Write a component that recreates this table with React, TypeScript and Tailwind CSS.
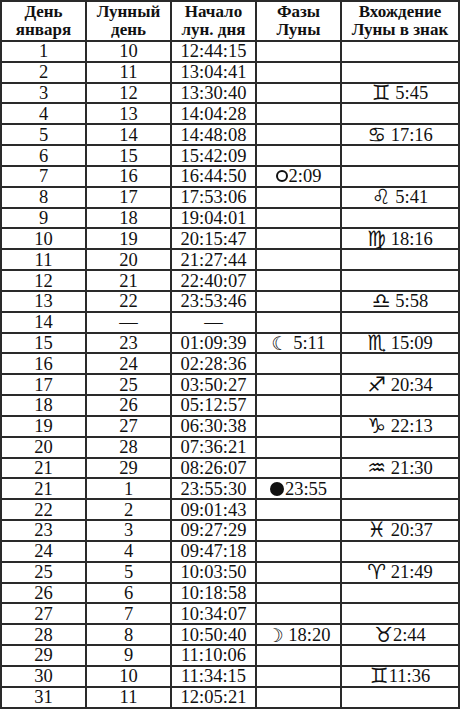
const rows: [string, string, string, string, string][] = [
  ['1', '10', '12:44:15', '', ''],
  ['2', '11', '13:04:41', '', ''],
  ['3', '12', '13:30:40', '', '♊| 5:45'],
  ['4', '13', '14:04:28', '', ''],
  ['5', '14', '14:48:08', '', '♋| 17:16'],
  ['6', '15', '15:42:09', '', ''],
  ['7', '16', '16:44:50', 'full|2:09', ''],
  ['8', '17', '17:53:06', '', '♌| 5:41'],
  ['9', '18', '19:04:01', '', ''],
  ['10', '19', '20:15:47', '', '♍| 18:16'],
  ['11', '20', '21:27:44', '', ''],
  ['12', '21', '22:40:07', '', ''],
  ['13', '22', '23:53:46', '', '♎| 5:58'],
  ['14', '—', '—', '', ''],
  ['15', '23', '01:09:39', '☾| 5:11', '♏| 15:09'],
  ['16', '24', '02:28:36', '', ''],
  ['17', '25', '03:50:27', '', '♐| 20:34'],
  ['18', '26', '05:12:57', '', ''],
  ['19', '27', '06:30:38', '', '♑| 22:13'],
  ['20', '28', '07:36:21', '', ''],
  ['21', '29', '08:26:07', '', '♒| 21:30'],
  ['21', '1', '23:55:30', 'new|23:55', ''],
  ['22', '2', '09:01:43', '', ''],
  ['23', '3', '09:27:29', '', '♓| 20:37'],
  ['24', '4', '09:47:18', '', ''],
  ['25', '5', '10:03:50', '', '♈| 21:49'],
  ['26', '6', '10:18:58', '', ''],
  ['27', '7', '10:34:07', '', ''],
  ['28', '8', '10:50:40', '☽| 18:20', '♉|2:44'],
  ['29', '9', '11:10:06', '', ''],
  ['30', '10', '11:34:15', '', '♊|11:36'],
  ['31', '11', '12:05:21', '', ''],
];

const cell = 'border-r-2 border-b-2 border-[#2a2a2a] flex items-center justify-center';

function Symbol({ value }: { value: string }) {
  if (!value) return null;
  const [sym, time] = value.split('|');
  let mark;
  if (sym === 'full') {
    mark = <span className="inline-block w-[12px] h-[12px] rounded-full border-[2.5px] border-[#111] mr-[1px]" />;
  } else if (sym === 'new') {
    mark = <span className="inline-block w-[14px] h-[14px] rounded-full bg-[#111] mr-[1px]" />;
  } else if (sym === '☾' || sym === '☽') {
    mark = <span className="font-['DejaVu_Sans',sans-serif] font-bold text-[19px] leading-[18px]">{sym}</span>;
  } else {
    mark = <span className="font-['DejaVu_Sans',sans-serif] text-[21px] leading-[18px]">{sym + '\uFE0E'}</span>;
  }
  return (
    <span className="flex items-center whitespace-pre">
      {mark}
      <span>{time}</span>
    </span>
  );
}

export default function App() {
  return (
    <div className="w-[464px] h-[710px] bg-white text-[#111] font-['Liberation_Serif',serif]">
      <div className="w-[460px] border-l-2 border-t-2 border-[#2a2a2a] grid grid-cols-[85px_85px_85px_85px_118px]">
        {['День|января', 'Лунный|день', 'Начало|лун. дня', 'Фазы|Луны', 'Вхождение|Луны в знак'].map((h) => (
          <div key={h} className={`${cell} h-[40px] flex-col text-[17px] font-bold leading-[18px]`}>
            {h.split('|').map((l) => (
              <span key={l}>{l}</span>
            ))}
          </div>
        ))}
        {rows.map((r, i) => (
          <div key={i} className="contents">
            <div className={`${cell} h-[20.84px] text-[18.5px] leading-[18px]`}>{r[0]}</div>
            <div className={`${cell} h-[20.84px] text-[18.5px] leading-[18px]`}>{r[1]}</div>
            <div className={`${cell} h-[20.84px] text-[18.5px] leading-[18px]`}>{r[2]}</div>
            <div className={`${cell} h-[20.84px] text-[18.5px] leading-[18px]`}>
              <Symbol value={r[3]} />
            </div>
            <div className={`${cell} h-[20.84px] text-[18.5px] leading-[18px]`}>
              <Symbol value={r[4]} />
            </div>
          </div>
        ))}
      </div>
    </div>
  );
}
